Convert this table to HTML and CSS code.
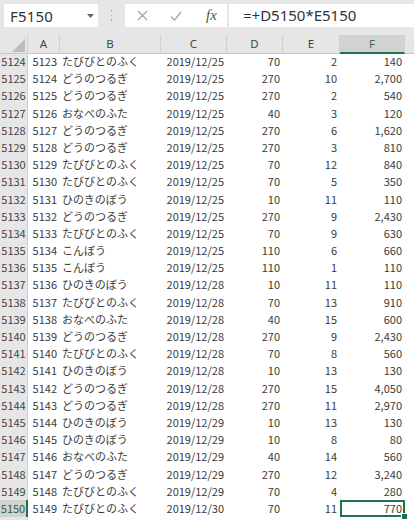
FILE: index.html
```html
<!DOCTYPE html>
<html lang="ja">
<head>
<meta charset="utf-8">
<link rel="stylesheet" href="styles.css">
</head>
<body>
<div class="app">
  <div class="toolbar">
    <div class="namebox">
      <span class="name">F5150</span>
      <svg class="caret" width="7" height="4" viewBox="0 0 7 4"><path d="M0 0h7L3.5 4z" fill="#666"/></svg>
    </div>
    <div class="dots"><i></i><i></i><i></i></div>
    <div class="btnbox">
      <svg class="ico" width="11" height="11" viewBox="0 0 11 11"><path d="M1 1l9 9M10 1l-9 9" stroke="#a6a6a6" stroke-width="1.2" fill="none"/></svg>
      <svg class="ico" width="12" height="10" viewBox="0 0 12 10"><path d="M1 5.5l3.5 3.5L11 1" stroke="#a6a6a6" stroke-width="1.2" fill="none"/></svg>
      <span class="fx">fx</span>
    </div>
    <div class="formula">=+D5150*E5150</div>
  </div>
  <div class="sheet">
    <div class="row head">
      <div class="corner"><span class="tri"></span></div>
      <div class="ch">A</div><div class="ch">B</div><div class="ch">C</div><div class="ch">D</div><div class="ch">E</div><div class="ch sel">F</div><div class="ch last">G</div>
    </div>
    <div class="row"><div class="rh">5124</div><div class="c r">5123</div><div class="c">たびびとのふく</div><div class="c r">2019/12/25</div><div class="c r">70</div><div class="c r">2</div><div class="c r">140</div><div class="c"></div></div>
    <div class="row"><div class="rh">5125</div><div class="c r">5124</div><div class="c">どうのつるぎ</div><div class="c r">2019/12/25</div><div class="c r">270</div><div class="c r">10</div><div class="c r">2,700</div><div class="c"></div></div>
    <div class="row"><div class="rh">5126</div><div class="c r">5125</div><div class="c">どうのつるぎ</div><div class="c r">2019/12/25</div><div class="c r">270</div><div class="c r">2</div><div class="c r">540</div><div class="c"></div></div>
    <div class="row"><div class="rh">5127</div><div class="c r">5126</div><div class="c">おなべのふた</div><div class="c r">2019/12/25</div><div class="c r">40</div><div class="c r">3</div><div class="c r">120</div><div class="c"></div></div>
    <div class="row"><div class="rh">5128</div><div class="c r">5127</div><div class="c">どうのつるぎ</div><div class="c r">2019/12/25</div><div class="c r">270</div><div class="c r">6</div><div class="c r">1,620</div><div class="c"></div></div>
    <div class="row"><div class="rh">5129</div><div class="c r">5128</div><div class="c">どうのつるぎ</div><div class="c r">2019/12/25</div><div class="c r">270</div><div class="c r">3</div><div class="c r">810</div><div class="c"></div></div>
    <div class="row"><div class="rh">5130</div><div class="c r">5129</div><div class="c">たびびとのふく</div><div class="c r">2019/12/25</div><div class="c r">70</div><div class="c r">12</div><div class="c r">840</div><div class="c"></div></div>
    <div class="row"><div class="rh">5131</div><div class="c r">5130</div><div class="c">たびびとのふく</div><div class="c r">2019/12/25</div><div class="c r">70</div><div class="c r">5</div><div class="c r">350</div><div class="c"></div></div>
    <div class="row"><div class="rh">5132</div><div class="c r">5131</div><div class="c">ひのきのぼう</div><div class="c r">2019/12/25</div><div class="c r">10</div><div class="c r">11</div><div class="c r">110</div><div class="c"></div></div>
    <div class="row"><div class="rh">5133</div><div class="c r">5132</div><div class="c">どうのつるぎ</div><div class="c r">2019/12/25</div><div class="c r">270</div><div class="c r">9</div><div class="c r">2,430</div><div class="c"></div></div>
    <div class="row"><div class="rh">5134</div><div class="c r">5133</div><div class="c">たびびとのふく</div><div class="c r">2019/12/25</div><div class="c r">70</div><div class="c r">9</div><div class="c r">630</div><div class="c"></div></div>
    <div class="row"><div class="rh">5135</div><div class="c r">5134</div><div class="c">こんぼう</div><div class="c r">2019/12/25</div><div class="c r">110</div><div class="c r">6</div><div class="c r">660</div><div class="c"></div></div>
    <div class="row"><div class="rh">5136</div><div class="c r">5135</div><div class="c">こんぼう</div><div class="c r">2019/12/25</div><div class="c r">110</div><div class="c r">1</div><div class="c r">110</div><div class="c"></div></div>
    <div class="row"><div class="rh">5137</div><div class="c r">5136</div><div class="c">ひのきのぼう</div><div class="c r">2019/12/28</div><div class="c r">10</div><div class="c r">11</div><div class="c r">110</div><div class="c"></div></div>
    <div class="row"><div class="rh">5138</div><div class="c r">5137</div><div class="c">たびびとのふく</div><div class="c r">2019/12/28</div><div class="c r">70</div><div class="c r">13</div><div class="c r">910</div><div class="c"></div></div>
    <div class="row"><div class="rh">5139</div><div class="c r">5138</div><div class="c">おなべのふた</div><div class="c r">2019/12/28</div><div class="c r">40</div><div class="c r">15</div><div class="c r">600</div><div class="c"></div></div>
    <div class="row"><div class="rh">5140</div><div class="c r">5139</div><div class="c">どうのつるぎ</div><div class="c r">2019/12/28</div><div class="c r">270</div><div class="c r">9</div><div class="c r">2,430</div><div class="c"></div></div>
    <div class="row"><div class="rh">5141</div><div class="c r">5140</div><div class="c">たびびとのふく</div><div class="c r">2019/12/28</div><div class="c r">70</div><div class="c r">8</div><div class="c r">560</div><div class="c"></div></div>
    <div class="row"><div class="rh">5142</div><div class="c r">5141</div><div class="c">ひのきのぼう</div><div class="c r">2019/12/28</div><div class="c r">10</div><div class="c r">13</div><div class="c r">130</div><div class="c"></div></div>
    <div class="row"><div class="rh">5143</div><div class="c r">5142</div><div class="c">どうのつるぎ</div><div class="c r">2019/12/28</div><div class="c r">270</div><div class="c r">15</div><div class="c r">4,050</div><div class="c"></div></div>
    <div class="row"><div class="rh">5144</div><div class="c r">5143</div><div class="c">どうのつるぎ</div><div class="c r">2019/12/28</div><div class="c r">270</div><div class="c r">11</div><div class="c r">2,970</div><div class="c"></div></div>
    <div class="row"><div class="rh">5145</div><div class="c r">5144</div><div class="c">ひのきのぼう</div><div class="c r">2019/12/29</div><div class="c r">10</div><div class="c r">13</div><div class="c r">130</div><div class="c"></div></div>
    <div class="row"><div class="rh">5146</div><div class="c r">5145</div><div class="c">ひのきのぼう</div><div class="c r">2019/12/29</div><div class="c r">10</div><div class="c r">8</div><div class="c r">80</div><div class="c"></div></div>
    <div class="row"><div class="rh">5147</div><div class="c r">5146</div><div class="c">おなべのふた</div><div class="c r">2019/12/29</div><div class="c r">40</div><div class="c r">14</div><div class="c r">560</div><div class="c"></div></div>
    <div class="row"><div class="rh">5148</div><div class="c r">5147</div><div class="c">どうのつるぎ</div><div class="c r">2019/12/29</div><div class="c r">270</div><div class="c r">12</div><div class="c r">3,240</div><div class="c"></div></div>
    <div class="row"><div class="rh">5149</div><div class="c r">5148</div><div class="c">たびびとのふく</div><div class="c r">2019/12/29</div><div class="c r">70</div><div class="c r">4</div><div class="c r">280</div><div class="c"></div></div>
    <div class="row"><div class="rh sel">5150</div><div class="c r">5149</div><div class="c">たびびとのふく</div><div class="c r">2019/12/30</div><div class="c r">70</div><div class="c r">11</div><div class="c r active">770<span class="handle"></span></div><div class="c"></div></div>
    <div class="row"><div class="rh">5151</div><div class="c r">5150</div><div class="c">ひのきのぼう</div><div class="c r">2019/12/30</div><div class="c r">10</div><div class="c r">10</div><div class="c r">100</div><div class="c"></div></div>
  </div>
</div>
</body>
</html>
```
FILE: styles.css
```css
html, body {
  margin: 0;
  padding: 0;
  background: #fff;
}
body {
  width: 414px;
  height: 520px;
  overflow: hidden;
}
.app {
  width: 414px;
  overflow: hidden;
}
.toolbar {
  height: 35px;
  background: #e6e6e6;
  display: flex;
  align-items: flex-start;
  padding-top: 4px;
  box-sizing: border-box;
}
.namebox {
  margin-left: 4px;
  width: 94px;
  height: 23px;
  background: #fff;
  display: flex;
  align-items: center;
  box-sizing: border-box;
  padding-left: 6px;
  position: relative;
}
.name {
  font-family: "Noto Sans", sans-serif;
  font-size: 15px;
  color: #333;
  letter-spacing: 0.2px;
}
.caret {
  position: absolute;
  left: 83px;
  top: 10px;
}
.dots {
  width: 27px;
  height: 23px;
  display: flex;
  flex-direction: column;
  align-items: center;
  justify-content: center;
  gap: 3px;
}
.dots i {
  display: block;
  width: 1.5px;
  height: 1.5px;
  background: #aaa;
}
.btnbox {
  width: 102px;
  height: 23px;
  background: #fff;
  display: flex;
  align-items: center;
  box-sizing: border-box;
  padding-left: 12px;
}
.btnbox .ico {
  margin-right: 22px;
}
.btnbox .ico + .ico {
  margin-right: 24px;
}
.fx {
  font-family: "Liberation Serif", serif;
  font-style: italic;
  font-size: 15px;
  color: #555;
}
.formula {
  margin-left: 2px;
  flex: 1;
  height: 23px;
  background: #fff;
  font-family: "Noto Sans", sans-serif;
  font-size: 15px;
  color: #333;
  line-height: 23px;
  padding-left: 14px;
  white-space: nowrap;
}
.sheet {
  width: 430px;
}
.row {
  display: grid;
  grid-template-columns: 28px 32px 101px 66px 56px 57px 65px 25px;
  height: 17.2px;
  font-family: "Noto Sans CJK JP", sans-serif;
  font-size: 11px;
  color: #3a3a3a;
}
.row.head {
  height: 18px;
  background: #e6e6e6;
}
.corner {
  position: relative;
  border-right: 1px solid #d0d0d0;
  border-bottom: 1px solid #c8c8c8;
}
.tri {
  position: absolute;
  right: 2px;
  bottom: 1px;
  width: 0;
  height: 0;
  border-left: 13px solid transparent;
  border-bottom: 13px solid #bdbdbd;
}
.ch {
  text-align: center;
  line-height: 17px;
  font-size: 11.5px;
  color: #444;
  border-right: 1px solid #d0d0d0;
  border-bottom: 1px solid #c8c8c8;
  font-family: "Noto Sans", sans-serif;
}
.ch.sel {
  background: #d2d2d2;
  border-bottom: 2px solid #217346;
  color: #3d6b4c;
}
.ch.last {
  border-right: none;
}
.rh {
  background: #e6e6e6;
  text-align: center;
  line-height: 17px;
  color: #444;
  border-right: 1px solid #d0d0d0;
  box-sizing: border-box;
  overflow: hidden;
}
.rh.sel {
  background: #d2d2d2;
  border-right: 2px solid #217346;
  color: #2e5e3e;
}
.c {
  line-height: 17px;
  padding: 0 2px 0 2px;
  white-space: nowrap;
  overflow: visible;
}
.c.r {
  text-align: right;
  padding-right: 3px;
}
.active {
  position: relative;
  outline: 2px solid #217346;
  outline-offset: -2px;
  z-index: 1;
}
.handle {
  position: absolute;
  right: -3px;
  bottom: -3px;
  width: 5px;
  height: 5px;
  background: #217346;
  border: 1px solid #fff;
}
```
